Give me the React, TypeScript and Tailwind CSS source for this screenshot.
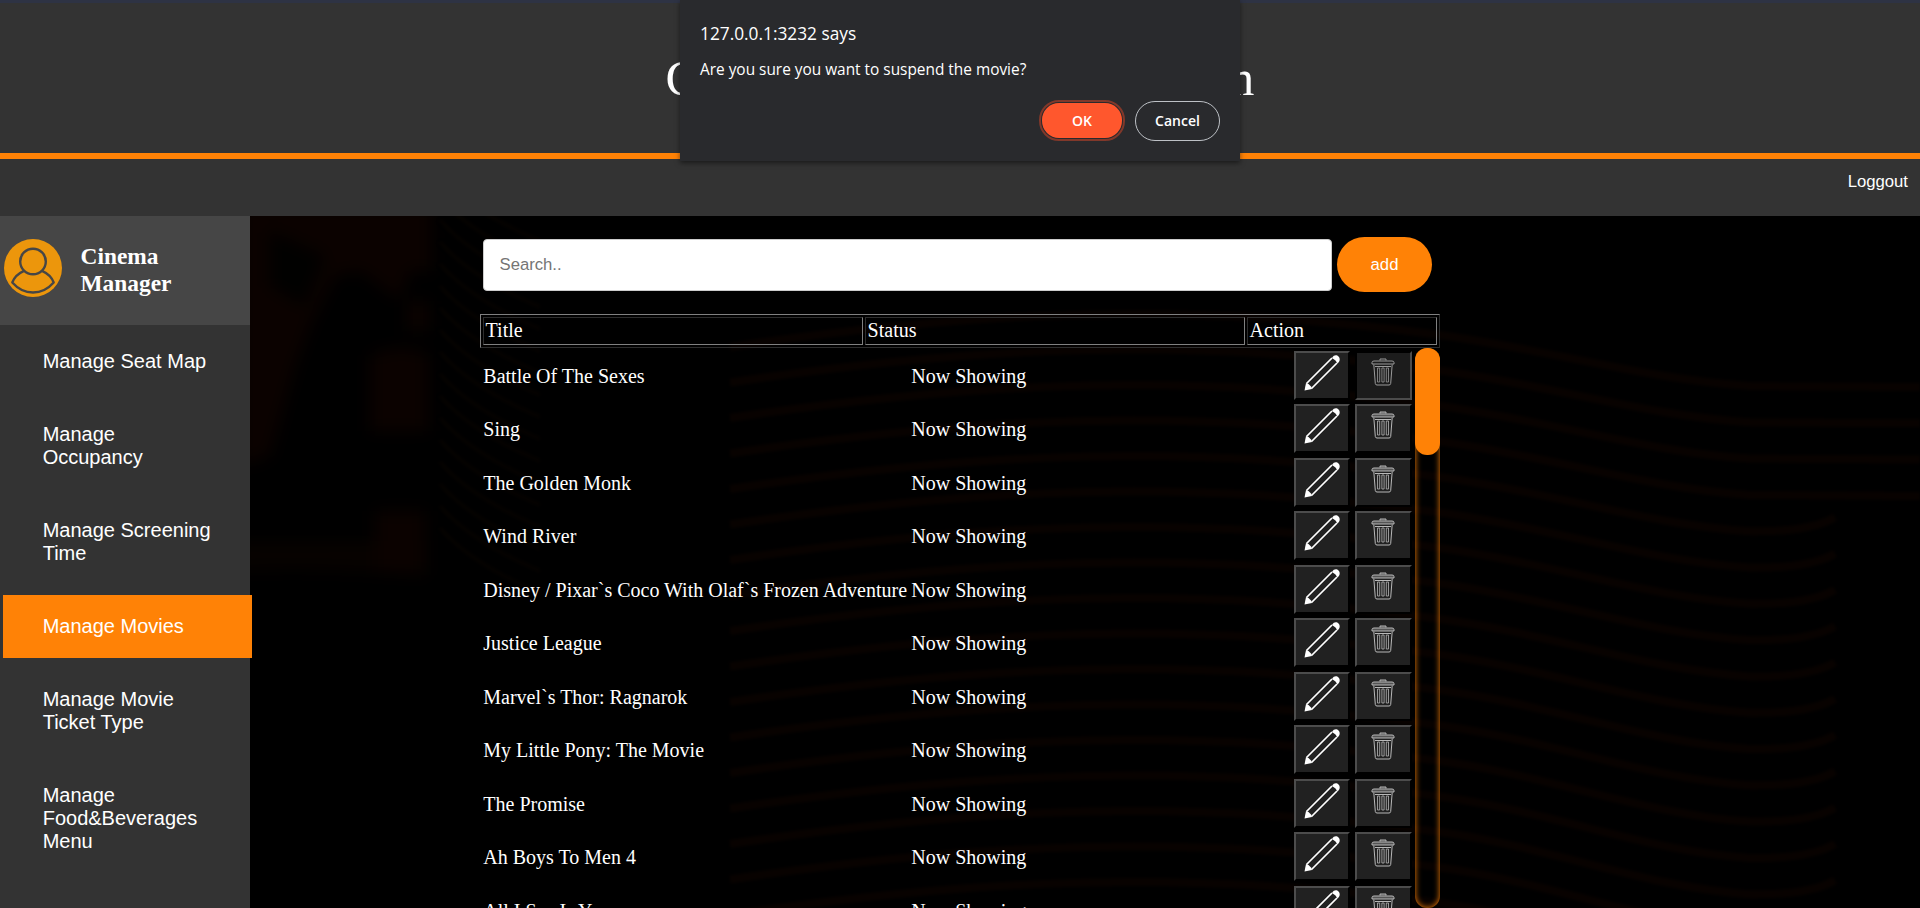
import React from 'react';

const movies = [
  'Battle Of The Sexes', 'Sing', 'The Golden Monk', 'Wind River',
  'Disney / Pixar`s Coco With Olaf`s Frozen Adventure', 'Justice League',
  'Marvel`s Thor: Ragnarok', 'My Little Pony: The Movie', 'The Promise',
  'Ah Boys To Men 4', 'All I See Is You',
];

const menu = [
  { label: 'Manage Seat Map' },
  { label: 'Manage Occupancy' },
  { label: 'Manage Screening Time' },
  { label: 'Manage Movies', active: true },
  { label: 'Manage Movie Ticket Type' },
  { label: 'Manage Food&Beverages Menu' },
];

const columns = [
  { label: 'Title', width: 'w-[380px]' },
  { label: 'Status', width: 'w-[380px]' },
  { label: 'Action', width: 'w-[190px]' },
];

function wavePath(i: number) {
  const mid = 119 + i * 35.5;
  const low = 170 + i * 36.3;
  const rise = i > 3 ? `Q1560 ${low + 1} 1585 ${low - 14}` : `L1670 ${low + 1}`;
  return `M480 ${mid + 12}C660 ${mid - 15} 900 ${mid - 40} 1190 ${mid}C1300 ${mid + 15} 1400 ${low - 6} 1500 ${low}${rise}`;
}

function Backdrop() {
  const waves = Array.from({ length: 17 }, (_, i) => i);
  return (
    <svg className="absolute inset-0 h-full w-full" viewBox="0 0 1670 692" aria-hidden="true">
      <defs>
        <filter id="soft" colorInterpolationFilters="sRGB"><feGaussianBlur stdDeviation="8" /></filter>
        <filter id="line" colorInterpolationFilters="sRGB"><feGaussianBlur stdDeviation="1.5" /></filter>
      </defs>
      <g filter="url(#soft)" fill="#0b0200">
        <path d="M-10 -10H182V55H160L150 85L110 55L85 60L60 110L45 150L20 240L-10 250Z" />
        <path d="M20 15L75 40L55 90L20 70Z" fill="#010100" />
        <path d="M120 140Q150 125 178 138V215H120Z" />
        <path d="M-10 325H176V360Q60 350 -10 355Z" fill="#070200" />
        <rect x="125" y="295" width="50" height="60" />
        <rect x="157" y="85" width="22" height="30" />
      </g>
      <g filter="url(#line)" fill="none" stroke="#080200" strokeWidth="8">
        {waves.map((i) => <path key={i} d={wavePath(i)} />)}
      </g>
      <g filter="url(#line)" fill="none" stroke="#050200" strokeWidth="4">
        {waves.map((i) => (
          <path key={i} d={`M190 ${-40 + i * 22}Q220 ${-5 + i * 22} 290 ${25 + i * 22}`} />
        ))}
      </g>
    </svg>
  );
}

function Avatar() {
  return (
    <svg className="h-[58px] w-[58px] shrink-0" viewBox="0 0 58 58" aria-hidden="true">
      <circle cx="29" cy="29" r="29" fill="#ec960c" />
      <g fill="none" stroke="#464646" strokeWidth="2.4">
        <circle cx="29" cy="22.5" r="12.800" />
        <path d="M20 31.800C14 34.500 10 38.500 8.300 43.500C14 50 21 53.500 29 53.500S44 50 49.700 43.500C48 38.500 44 34.500 38 31.800" strokeLinejoin="round" />
      </g>
    </svg>
  );
}

function Pencil() {
  return (
    <svg className="h-9 w-9" viewBox="0 0 36 36" aria-hidden="true">
      <path d="M2.500 28.500L28 3M7.500 33.500L33 8" fill="none" stroke="#fff" strokeWidth="1.700" />
      <path d="M0.500 35.500L2 28L4.500 29L7 31.500L8 34Z" fill="#fff" />
      <path d="M28 3C30-0.500 33 0 34.500 1.500S36.500 6 33.500 8.500L31.500 5.500Z" fill="#fff" />
    </svg>
  );
}

function Trash({ dim }: { dim: boolean }) {
  return (
    <svg className="mr-px h-7 w-6" viewBox="0 0 24 28" fill="none" stroke={dim ? '#9a9a9a' : '#b8b8b8'} aria-hidden="true">
      <path d="M9 2.500V1H15V2.500M1 6V4.500Q1 3 3 3H21Q23 3 23 4.500V6Z" fill={dim ? 'none' : '#555'} />
      <path d="M2.800 6.500L4.300 25.500Q4.500 27 6 27H18Q19.500 27 19.700 25.500L21.200 6.500M4 8.500H20" />
      <path d="M6.500 10V24H8.700V10ZM10.900 10V24H13.100V10ZM15.300 10V24H17.500V10Z" strokeWidth=".8" />
    </svg>
  );
}

const raised = 'border-t-[#4c4c4c] border-r-black border-b-black border-l-[#4c4c4c] bg-[#212121]';
const pressed = 'border-t-black border-r-[#4c4c4c] border-b-[#4c4c4c] border-l-black bg-[#1c1c1c]';

export default function App() {
  return (
    <div className="relative flex h-[908px] w-[1920px] flex-col overflow-hidden bg-black font-['Liberation_Serif',serif] text-white">
      <header className="h-[159px] shrink-0 border-t-[3px] border-b-[6px] border-t-[#2e3344] border-b-[#ff8206] bg-[#333]">
        <h1 className="pt-12 text-center text-[50px] leading-[55px]">Cinema Management System</h1>
      </header>
      <nav className="flex h-[57px] shrink-0 justify-end bg-[#333] pt-[13px] pr-3 font-['Liberation_Sans',sans-serif] text-[16.7px] leading-5">
        <a>Loggout</a>
      </nav>

      <div className="flex min-h-0 flex-1">
        <aside className="z-10 w-[250px] shrink-0 bg-[#333]">
          <div className="flex h-[109px] items-center gap-[18.5px] bg-[#464646] pb-1.5 pl-1">
            <Avatar />
            <h2 className="w-[120px] pt-1 text-[23.4px] leading-[27px] font-bold">Cinema Manager</h2>
          </div>
          <ul className="flex flex-col gap-2.5 pt-[5px] pl-[3px] font-['Liberation_Sans',sans-serif] text-[20px] leading-[23px]">
            {menu.map((m) => (
              <li key={m.label} className={`w-[249px] py-5 pr-[39px] pl-[39.7px] ${m.active ? 'bg-[#ff8206]' : ''}`}>
                {m.label}
              </li>
            ))}
          </ul>
        </aside>

        <main className="relative flex-1 overflow-hidden">
          <Backdrop />
          <div className="relative ml-[230px] flex w-[960px] flex-col">
            <div className="flex h-[98px] gap-[5px] pt-[21px] pl-[3px]">
              <input
                className="mt-0.5 h-[52px] w-[849px] rounded border border-[#ccc] bg-white px-[15.5px] font-['Liberation_Sans',sans-serif] text-[16.7px] text-black placeholder:text-[#757575]"
                placeholder="Search.."
              />
              <button className="h-[55px] w-[95px] rounded-[28px] bg-[#ff8206] font-['Liberation_Sans',sans-serif] text-[16.7px]">add</button>
            </div>
            <div className="flex h-[34px] gap-0.5 border border-t-[#808080] border-r-[#2c2c2c] border-b-[#2c2c2c] border-l-[#808080] p-0.5 text-[20px] leading-[25px]">
              {columns.map((c) => (
                <div key={c.label} className={`${c.width} border border-t-[#2c2c2c] border-r-[#808080] border-b-[#808080] border-l-[#2c2c2c] pl-[1.6px]`}>
                  {c.label}
                </div>
              ))}
            </div>
            <div className="flex h-[560px] overflow-hidden">
              <div className="w-[935px] pt-[2.9px] text-[20px]">
                {movies.map((t, i) => (
                  <div key={t} className="flex h-[53.5px] pl-[3.3px] whitespace-nowrap">
                    <div className="w-[428px] pt-3 leading-[27px]">{t}</div>
                    <div className="w-[382.7px] pt-3 leading-[27px]">Now Showing</div>
                    <div className="flex gap-[5px]">
                      <button className={`flex h-[49px] w-14 justify-center border-2 pt-0.5 ${raised}`}><Pencil /></button>
                      <button className={`flex h-[49px] w-[57px] justify-center border-2 pt-[5px] ${i === 0 ? pressed : raised}`}><Trash dim={i === 0} /></button>
                    </div>
                  </div>
                ))}
              </div>
              <div className="h-[560px] w-[25px] rounded-[12px] shadow-[inset_0_0_6px_#ff8206]">
                <div className="h-[107px] rounded-[12px] bg-[#ff8206]" />
              </div>
            </div>
          </div>
        </main>
      </div>

      <div role="dialog" className="absolute top-0 left-[680px] z-20 h-[161px] w-[560px] bg-[#292a2d] px-5 font-['Open_Sans',sans-serif] shadow-[0_2px_5px_rgba(0,0,0,0.5)]">
        <p className="pt-[22px] text-[17.3px] leading-6">127.0.0.1:3232 says</p>
        <p className="mt-3 text-[15.4px] leading-6">Are you sure you want to suspend the movie?</p>
        <div className="mt-[19px] flex items-center justify-end gap-[13px] text-[14px] leading-5 font-semibold">
          <button className="mb-px h-[35px] w-20 rounded-[17px] bg-[#ff572d] outline-2 outline-offset-1 outline-[#81382a]">OK</button>
          <button className="h-10 w-[85px] rounded-[20px] border border-[#bdc1c6] pb-px">Cancel</button>
        </div>
      </div>
    </div>
  );
}
